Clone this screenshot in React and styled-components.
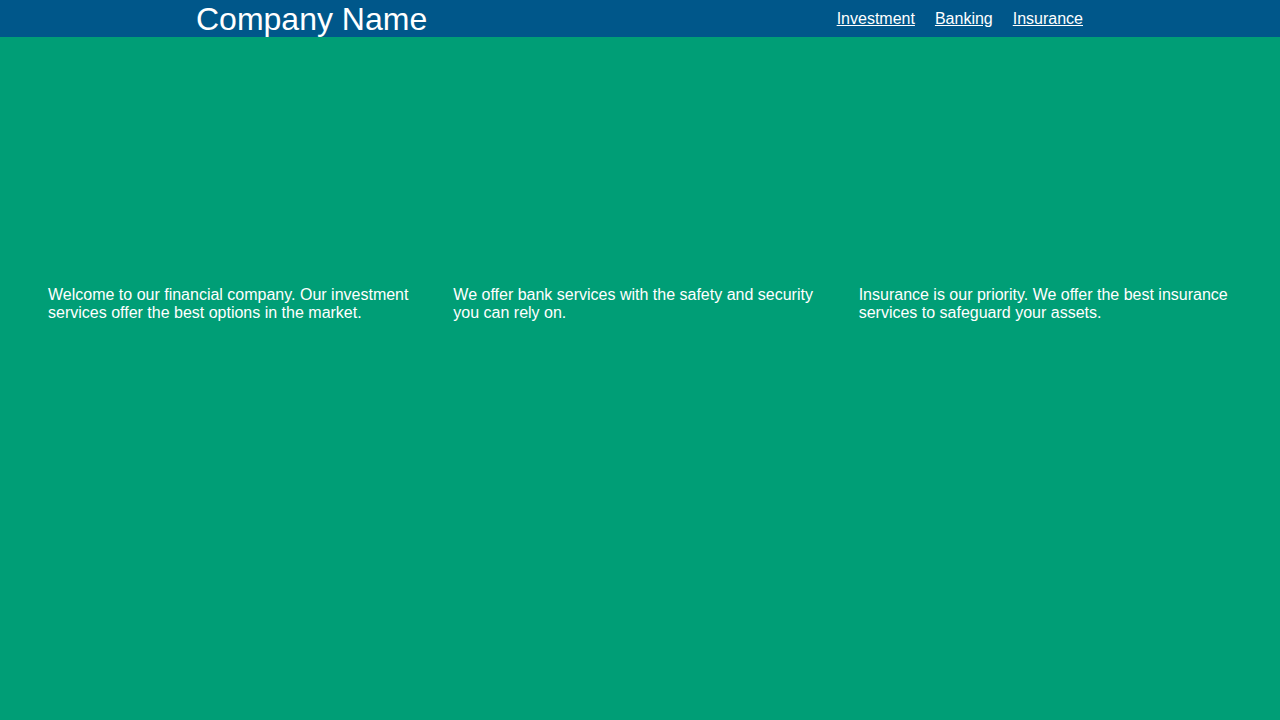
import React from "react";
import styled, { createGlobalStyle } from "styled-components";

const GlobalStyle = createGlobalStyle`
  html, body {
    margin: 0;
    padding: 0;
    background: #009e76;
    font-family: "Liberation Sans", Arial, sans-serif;
    color: #fff;
  }
`;

const services = [
  "Welcome to our financial company. Our investment services offer the best options in the market.",
  "We offer bank services with the safety and security you can rely on.",
  "Insurance is our priority. We offer the best insurance services to safeguard your assets.",
];

export default function App() {
  return (
    <>
      <GlobalStyle />
      <Header>
        <Brand>Company Name</Brand>
        <Nav>
          <NavLink href="#">Investment</NavLink>
          <NavLink href="#">Banking</NavLink>
          <NavLink href="#">Insurance</NavLink>
        </Nav>
      </Header>
      <Main>
        {services.map((text, i) => (
          <Column key={i}>
            <p>{text}</p>
          </Column>
        ))}
      </Main>
    </>
  );
}

const Header = styled.header`
  height: 37px;
  background: #00578a;
  display: flex;
  align-items: center;
  justify-content: space-between;
  padding: 0 197px 0 196px;
`;

const Brand = styled.h1`
  margin: 2px 0 0;
  font-size: 32px;
  font-weight: 400;
  line-height: 37px;
`;

const Nav = styled.nav`
  display: flex;
  gap: 20px;
`;

const NavLink = styled.a`
  color: #fff;
  font-size: 16px;
  text-decoration: underline;
`;

const Main = styled.main`
  display: flex;
  padding: 233px 32px 0;
`;

const Column = styled.section`
  flex: 1;
  padding: 16px;
  p {
    margin: 0;
    font-size: 16px;
    line-height: 18px;
  }
`;
